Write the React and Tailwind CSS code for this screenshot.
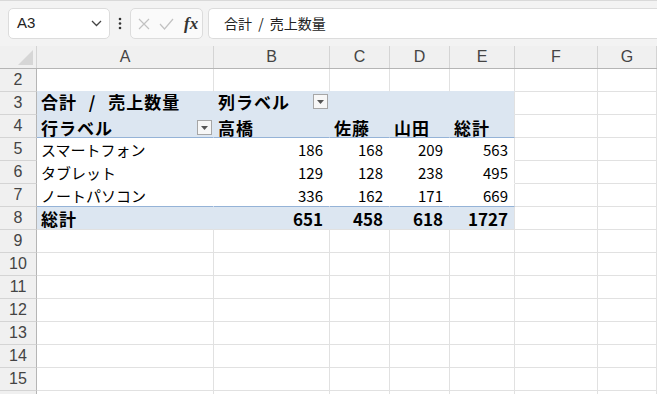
import React from 'react';

const columns = [
  { key: 'A', w: 'w-[177px]' },
  { key: 'B', w: 'w-[116px]' },
  { key: 'C', w: 'w-[60px]' },
  { key: 'D', w: 'w-[60px]' },
  { key: 'E', w: 'w-[65px]' },
  { key: 'F', w: 'w-[83px]' },
  { key: 'G', w: 'flex-1' },
];

const pivotRows = {
  3: { kind: 'head', cells: ['合計 / 売上数量', '列ラベル', '', '', ''], drop: 1 },
  4: { kind: 'head2', cells: ['行ラベル', '高橋', '佐藤', '山田', '総計'], drop: 0 },
  5: { kind: 'data', cells: ['スマートフォン', '186', '168', '209', '563'] },
  6: { kind: 'data', cells: ['タブレット', '129', '128', '238', '495'] },
  7: { kind: 'data', cells: ['ノートパソコン', '336', '162', '171', '669'], last: true },
  8: { kind: 'total', cells: ['総計', '651', '458', '618', '1727'] },
};

const rowNumbers = [2, 3, 4, 5, 6, 7, 8, 9, 10, 11, 12, 13, 14, 15, 16];

const DropButton = () => (
  <span className="w-[15px] h-[15px] shrink-0 border border-[#a6a6a6] bg-[#f7f7f7] flex items-center justify-center">
    <svg width="7" height="4" viewBox="0 0 7 4">
      <path d="M0 0h7L3.5 4z" fill="#555" />
    </svg>
  </span>
);

const PivotCell = ({ row, colIndex, col }) => {
  const text = row.cells[colIndex];
  const isBlueRow = row.kind !== 'data';
  const bg = isBlueRow ? 'bg-[#dce6f1]' : 'bg-white';
  let borderB = isBlueRow ? 'border-b-[#dce6f1]' : 'border-b-white';
  if (row.kind === 'head2' || row.last) borderB = 'border-b-[#95b3d7]';
  if (row.kind === 'total') borderB = 'border-b-[#e1e1e1]';
  const borderR = colIndex === 4 ? 'border-r-[#e1e1e1]' : isBlueRow ? 'border-r-[#dce6f1]' : 'border-r-white';
  const isNumber = colIndex > 0 && (row.kind === 'data' || row.kind === 'total');
  let font = 'font-normal text-[15px]';
  if (row.kind === 'head') font = 'font-bold text-[17px] tracking-[1px] [word-spacing:7px] pb-[3px]';
  if (row.kind === 'head2') font = 'font-bold text-[17px] tracking-[1px] pt-[3px]';
  if (row.kind === 'total') font = isNumber ? 'font-bold text-[17px]' : 'font-bold text-[17px] tracking-[1px]';

  return (
    <div
      className={`${col.w} h-[23px] shrink-0 border-r border-b ${bg} ${borderB} ${borderR} flex items-center ${
        isNumber ? 'justify-end pr-[6px]' : 'justify-between pl-[4px] pr-[1px]'
      } ${font} text-black whitespace-nowrap`}
    >
      <span className="leading-none">{text}</span>
      {row.drop === colIndex && <DropButton />}
    </div>
  );
};

const App = () => {
  return (
    <div className="w-[657px] h-[394px] overflow-hidden bg-white font-['Noto_Sans_CJK_JP',sans-serif]">
      {/* formula bar */}
      <div className="h-[46px] bg-[#f3f3f3] border-t border-[#d9d9d9] flex items-start pt-[7px] pl-[8px]">
        <div className="w-[102px] h-[31px] bg-white border border-[#dcdcdc] rounded-[5px] flex items-center justify-between pl-[8px] pr-[7px]">
          <span className="text-[15px] text-[#222] font-['Liberation_Sans',sans-serif]">A3</span>
          <svg width="11" height="7" viewBox="0 0 11 7" fill="none">
            <path d="M1 1l4.5 4.5L10 1" stroke="#444" strokeWidth="1.3" />
          </svg>
        </div>
        <div className="h-[31px] ml-[8px] flex items-center">
          <svg width="4" height="13" viewBox="0 0 4 13">
            <circle cx="2" cy="2" r="1.3" fill="#333" />
            <circle cx="2" cy="6.5" r="1.3" fill="#333" />
            <circle cx="2" cy="11" r="1.3" fill="#333" />
          </svg>
        </div>
        <div className="w-[73px] h-[31px] ml-[8px] bg-[#fafafa] border border-[#dcdcdc] rounded-[5px] flex items-center pl-[7px]">
          <svg width="12" height="12" viewBox="0 0 12 12">
            <path d="M1 1l10 10M11 1L1 11" stroke="#c2c2c2" strokeWidth="1.2" />
          </svg>
          <svg width="15" height="12" viewBox="0 0 15 12" fill="none" className="ml-[9px]">
            <path d="M1 6l4.5 5L14 1" stroke="#c2c2c2" strokeWidth="1.2" />
          </svg>
          <span className="ml-[10px] text-[17px] italic font-bold font-['Liberation_Serif',serif] text-[#333] leading-none">fx</span>
        </div>
        <div className="flex-1 h-[31px] ml-[5px] bg-white border border-[#dcdcdc] rounded-l-[5px] border-r-0 flex items-center pl-[15px]">
          <span className="text-[14px] text-[#222] [word-spacing:3px]">合計 / 売上数量</span>
        </div>
      </div>

      {/* column headers */}
      <div className="flex h-[23px] bg-[#f0f0f0] border-b border-[#b5b5b5]">
        <div className="w-[37px] shrink-0 border-r border-[#d4d4d4] flex items-end justify-end pr-[3px] pb-[3px]">
          <svg width="15" height="15" viewBox="0 0 15 15">
            <path d="M15 0V15H0z" fill="#d6d6d6" />
          </svg>
        </div>
        {columns.map((col) => (
          <div
            key={col.key}
            className={`${col.w} shrink-0 border-r border-[#d4d4d4] flex items-center justify-center text-[16px] text-[#444] font-['Liberation_Sans',sans-serif]`}
          >
            {col.key}
          </div>
        ))}
      </div>

      {/* rows */}
      {rowNumbers.map((n) => {
        const pivot = pivotRows[n];
        return (
          <div key={n} className="flex">
            <div className="w-[37px] h-[23px] shrink-0 bg-[#f0f0f0] border-r border-r-[#b5b5b5] border-b border-b-[#d4d4d4] flex items-center justify-center text-[16px] text-[#444] font-['Liberation_Sans',sans-serif]">
              {n < 16 ? n : ''}
            </div>
            {columns.map((col, i) =>
              pivot && i < 5 ? (
                <PivotCell key={col.key} row={pivot} colIndex={i} col={col} />
              ) : (
                <div
                  key={col.key}
                  className={`${col.w} h-[23px] shrink-0 border-r border-b border-[#e1e1e1] ${
                    n === 2 && i < 5 ? 'border-b-[#dce6f1]' : ''
                  }`}
                />
              )
            )}
          </div>
        );
      })}
    </div>
  );
};

export default App;
